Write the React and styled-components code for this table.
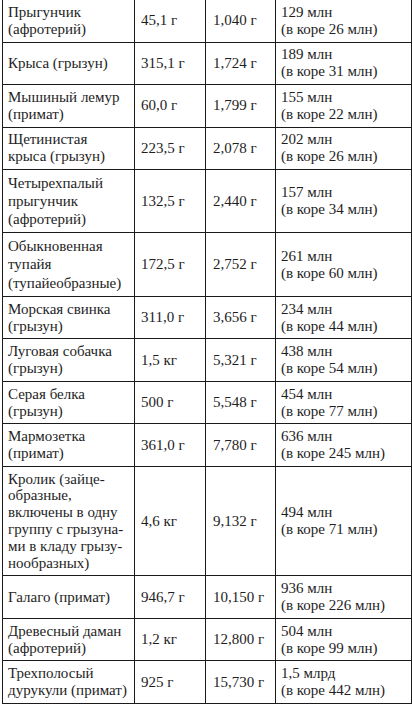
import React from 'react';
import styled, { createGlobalStyle } from 'styled-components';

const GlobalStyle = createGlobalStyle`
  html, body {
    margin: 0;
    padding: 0;
    background: #fff;
  }
  body {
    font-family: "Liberation Serif", serif;
    color: #1e1e1e;
  }
`;

const Page = styled.div`
  width: 412px;
  height: 704px;
  overflow: hidden;
`;

const Table = styled.table`
  border-collapse: collapse;
  table-layout: fixed;
  margin: -1px 0 0 2px;
  width: 409px;
`;

const Col = styled.col`
  width: ${(p) => p.$w}px;
`;

const Cell = styled.td`
  border: 1px solid #1b1b1b;
  padding: 3.75px 5px 3.75px ${(p) => p.$padLeft || 5}px;
  vertical-align: middle;
  font-family: "Liberation Serif", serif;
  font-size: 15px;
  color: #1e1e1e;
  line-height: ${(p) => p.$lh || 17}px;
  white-space: nowrap;
`;

const Line = styled.span`
  display: block;
`;

const rows = [
  { name: ['Прыгунчик', '(афротерий)'], mass: '45,1 г', brain: '1,040 г', neurons: ['129 млн', '(в коре 26 млн)'] },
  { name: ['Крыса (грызун)'], mass: '315,1 г', brain: '1,724 г', neurons: ['189 млн', '(в коре 31 млн)'] },
  { name: ['Мышиный лемур', '(примат)'], mass: '60,0 г', brain: '1,799 г', neurons: ['155 млн', '(в коре 22 млн)'] },
  { name: ['Щетинистая', 'крыса (грызун)'], mass: '223,5 г', brain: '2,078 г', neurons: ['202 млн', '(в коре 26 млн)'] },
  { name: ['Четырехпалый', 'прыгунчик', '(афротерий)'], mass: '132,5 г', brain: '2,440 г', neurons: ['157 млн', '(в коре 34 млн)'], lh: 18.3 },
  { name: ['Обыкновенная', 'тупайя', '(тупайеобразные)'], mass: '172,5 г', brain: '2,752 г', neurons: ['261 млн', '(в коре 60 млн)'], lh: 18.3 },
  { name: ['Морская свинка', '(грызун)'], mass: '311,0 г', brain: '3,656 г', neurons: ['234 млн', '(в коре 44 млн)'] },
  { name: ['Луговая собачка', '(грызун)'], mass: '1,5 кг', brain: '5,321 г', neurons: ['438 млн', '(в коре 54 млн)'] },
  { name: ['Серая белка', '(грызун)'], mass: '500 г', brain: '5,548 г', neurons: ['454 млн', '(в коре 77 млн)'] },
  { name: ['Мармозетка', '(примат)'], mass: '361,0 г', brain: '7,780 г', neurons: ['636 млн', '(в коре 245 млн)'] },
  {
    name: ['Кролик (зайце-', 'образные,', 'включены в одну', 'группу с грызуна-', 'ми в кладу грызу-', 'нообразных)'],
    mass: '4,6 кг',
    brain: '9,132 г',
    neurons: ['494 млн', '(в коре 71 млн)'],
    lh: 16.85,
  },
  { name: ['Галаго (примат)'], mass: '946,7 г', brain: '10,150 г', neurons: ['936 млн', '(в коре 226 млн)'] },
  { name: ['Древесный даман', '(афротерий)'], mass: '1,2 кг', brain: '12,800 г', neurons: ['504 млн', '(в коре 99 млн)'] },
  { name: ['Трехполосый', 'дурукули (примат)'], mass: '925 г', brain: '15,730 г', neurons: ['1,5 млрд', '(в коре 442 млн)'] },
];

function Lines({ items }) {
  return items.map((t) => <Line key={t}>{t}</Line>);
}

export default function App() {
  return (
    <Page>
      <GlobalStyle />
      <Table>
        <colgroup>
          <Col $w={132} />
          <Col $w={71} />
          <Col $w={70} />
          <Col $w={136} />
        </colgroup>
        <tbody>
          {rows.map((r) => (
            <tr key={r.name.join(' ')}>
              <Cell $lh={r.lh}>
                <Lines items={r.name} />
              </Cell>
              <Cell $padLeft={6}>{r.mass}</Cell>
              <Cell $padLeft={7}>{r.brain}</Cell>
              <Cell>
                <Lines items={r.neurons} />
              </Cell>
            </tr>
          ))}
        </tbody>
      </Table>
    </Page>
  );
}
